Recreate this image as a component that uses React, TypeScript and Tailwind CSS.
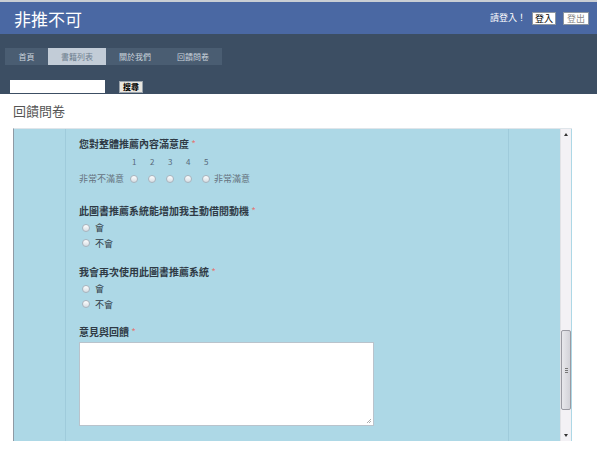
import React from "react";

const F = { fontFamily: '"Noto Sans CJK TC", "Noto Sans", sans-serif' };

function Radio() {
  return (
    <span className="inline-block w-[8px] h-[8px] rounded-full border border-[#a9b3bd] bg-gradient-to-b from-white to-[#d6dde3] shrink-0" />
  );
}

function Label({ text }: { text: string }) {
  return (
    <div className="text-[10px] leading-[12px] font-bold text-[#2f3a45]">
      {text} <span className="text-[#e07a7a] font-normal">*</span>
    </div>
  );
}

function Option({ text }: { text: string }) {
  return (
    <div className="flex items-center gap-[5px] h-[15.5px] pl-[3px] text-[9px] text-[#2f3a45]">
      <Radio />
      <span>{text}</span>
    </div>
  );
}

export default function App() {
  const tabs = ["首頁", "書籍列表", "關於我們", "回饋問卷"];
  return (
    <div className="w-[599px] h-[453px] bg-white overflow-hidden" style={F}>
      <div className="w-[597px]">
        {/* header */}
        <div className="h-[34px] bg-[#4a68a3] border-t-2 border-[#c9ced4] flex items-center justify-between pl-[14px] pr-[8px]">
          <div className="text-white text-[17px] leading-none tracking-[0px]">非推不可</div>
          <div className="flex items-center text-[9px]">
            <span className="text-white mr-[6px]">請登入！</span>
            <span className="bg-white border border-[#8c96a0] px-[2px] h-[13px] leading-[12px] text-black">登入</span>
            <span className="bg-white border border-[#8c96a0] px-[3px] h-[13px] leading-[12px] text-[#888] ml-[7px]">登出</span>
          </div>
        </div>
        {/* dark band */}
        <div className="h-[60px] bg-[#3c4e63] pt-[14px] pl-[5px]">
          <div className="flex h-[17px]">
            {tabs.map((t, i) => (
              <div
                key={t}
                className={
                  i === 1
                    ? "w-[58px] bg-[#c2ccd7] text-[#6f7f90] text-[8px] flex items-center justify-center"
                    : i === 0
                    ? "w-[43px] bg-[#4a5d72] text-[#c9d2dc] text-[8px] flex items-center justify-center"
                    : "w-[58px] bg-[#4a5d72] text-[#c9d2dc] text-[8px] flex items-center justify-center"
                }
              >
                {t}
              </div>
            ))}
          </div>
          <div className="flex items-center mt-[15px] pl-[5px]">
            <div className="w-[95px] h-[13px] bg-white" />
            <span className="ml-[14px] h-[12px] px-[3px] bg-[#e9e6df] border border-[#9aa3ac] text-[8px] leading-[10px] text-black font-bold">搜尋</span>
          </div>
        </div>
      </div>
      {/* body */}
      <div className="pl-[13px]">
        <div className="h-[34px] flex items-center text-[13px] text-[#555]">回饋問卷</div>
        <div className="w-[559px] h-[313px] flex border-l border-[#8f9aa4] border-t border-t-[#dfe5ea] bg-[#add8e6]">
          <div className="w-[52px] border-r border-[#9fcbdb]" />
          <div className="w-[443px] pl-[13px] pt-[9px] border-r border-[#9fcbdb]">
            <Label text="您對整體推薦內容滿意度" />
            <div className="flex text-[8px] text-[#58687a] mt-[7px] ml-[53px] h-[10px] items-center">
              {["1", "2", "3", "4", "5"].map((n) => (
                <span key={n} className="w-[18px]">{n}</span>
              ))}
            </div>
            <div className="flex items-center text-[9px] text-[#66737f] mt-[6px] h-[12px]">
              <span className="w-[51px]">非常不滿意</span>
              <div className="flex gap-[10px] items-center">
                <Radio /><Radio /><Radio /><Radio /><Radio />
              </div>
              <span className="ml-[4px]">非常滿意</span>
            </div>
            <div className="mt-[20px]">
              <Label text="此圖書推薦系統能增加我主動借閱動機" />
              <div className="mt-[3px]">
                <Option text="會" />
                <Option text="不會" />
              </div>
            </div>
            <div className="mt-[15px]">
              <Label text="我會再次使用此圖書推薦系統" />
              <div className="mt-[3px]">
                <Option text="會" />
                <Option text="不會" />
              </div>
            </div>
            <div className="mt-[14px]">
              <Label text="意見與回饋" />
              <div className="mt-[4px] w-[295px] h-[84px] bg-white border border-[#b9c3cc] relative">
                <svg className="absolute right-[1px] bottom-[1px]" width="6" height="6" viewBox="0 0 6 6">
                  <path d="M5 1 L1 5 M5 3 L3 5" stroke="#999" strokeWidth="0.8" />
                </svg>
              </div>
            </div>
          </div>
          <div className="w-[51px]" />
          {/* scrollbar */}
          <div className="w-[11px] bg-[#f3f1f5] border-l border-[#e2e2e6] flex flex-col items-center">
            <div className="h-[10px] flex items-center justify-center">
              <div className="w-0 h-0 border-l-[2px] border-r-[2px] border-b-[3px] border-l-transparent border-r-transparent border-b-[#333]" />
            </div>
            <div className="flex-1" />
            <div className="w-[10px] h-[80px] rounded-[2px] border border-[#9a9aa2] bg-gradient-to-r from-[#e8e8ec] to-[#d2d2d8] flex items-center justify-center">
              <div className="flex flex-col gap-[1px]">
                <div className="w-[3px] h-px bg-[#777]" />
                <div className="w-[3px] h-px bg-[#777]" />
                <div className="w-[3px] h-px bg-[#777]" />
              </div>
            </div>
            <div className="h-[31px] flex items-end justify-center pb-[4px]">
              <div className="w-0 h-0 border-l-[2px] border-r-[2px] border-t-[3px] border-l-transparent border-r-transparent border-t-[#333]" />
            </div>
          </div>
        </div>
      </div>
    </div>
  );
}
